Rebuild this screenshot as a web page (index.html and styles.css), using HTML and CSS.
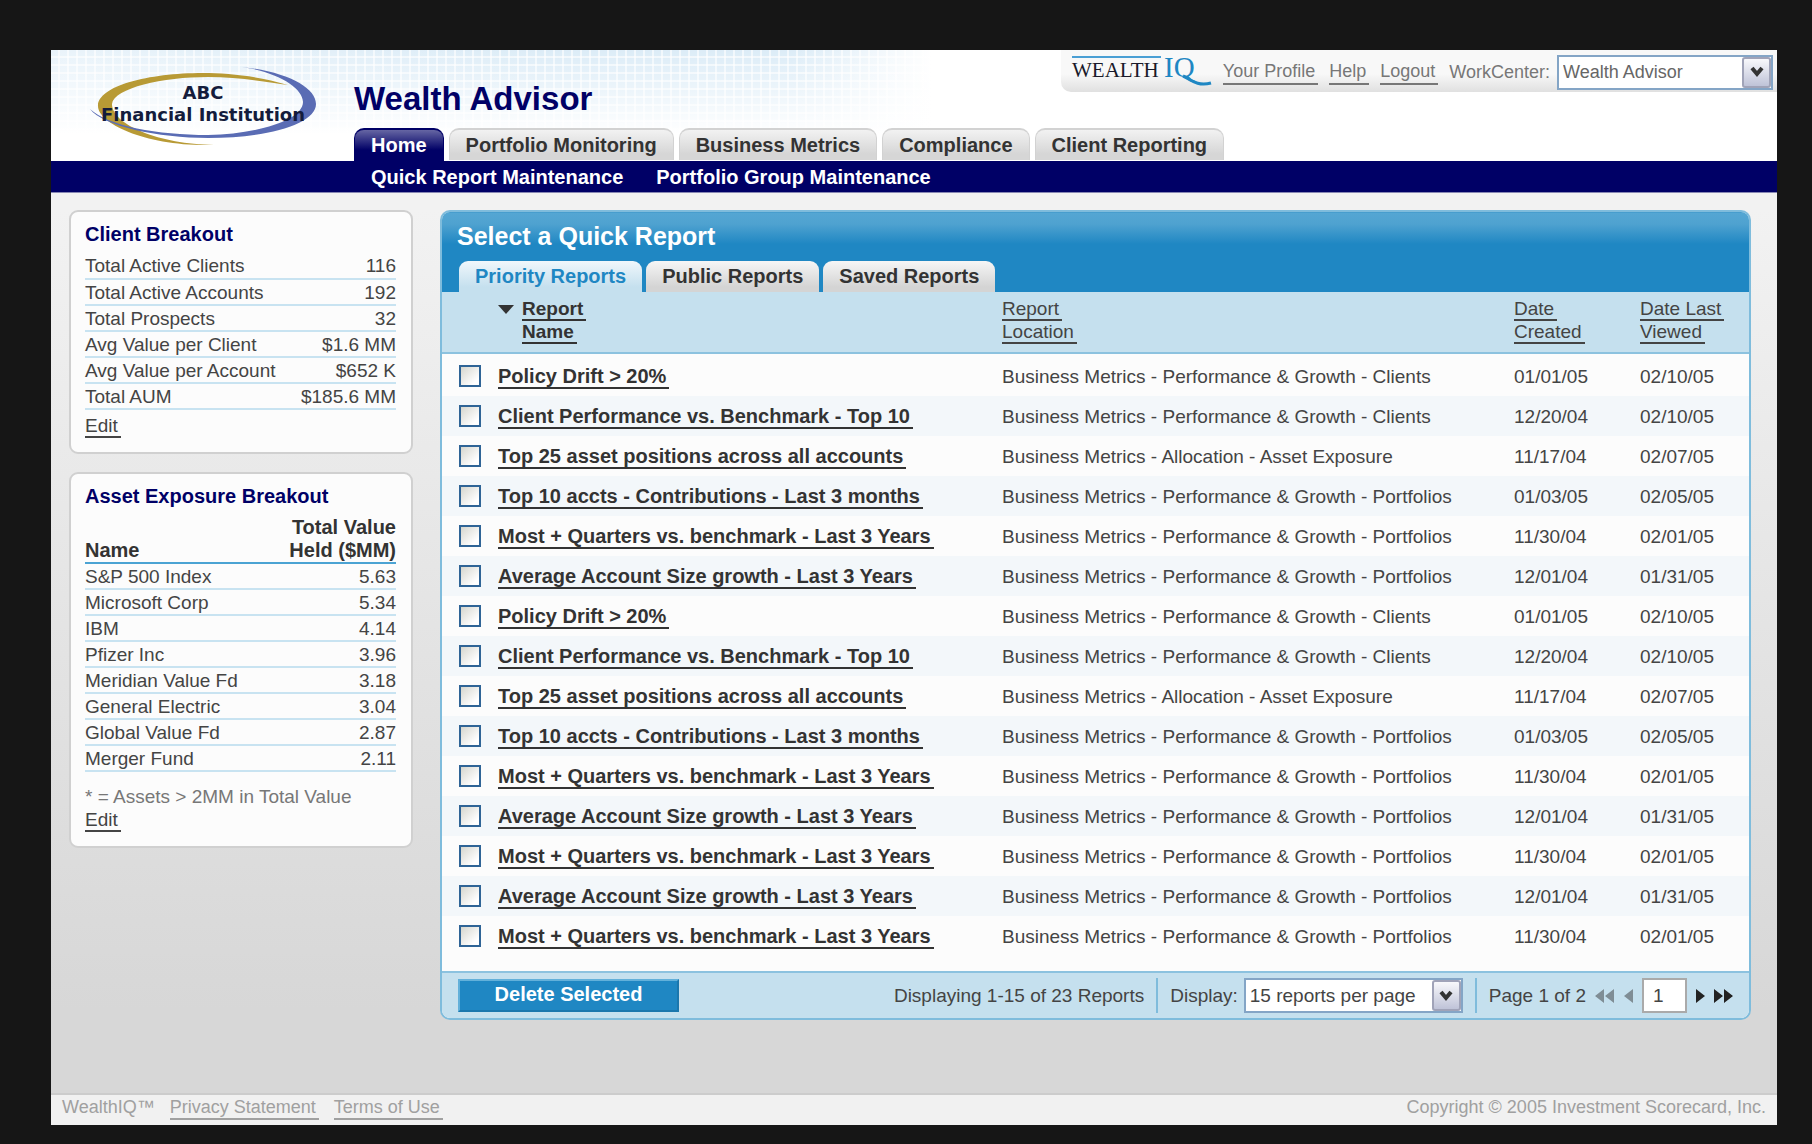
FILE: index.html
```html
<!DOCTYPE html>
<html lang="en">
<head>
  <meta charset="UTF-8">
  <meta name="viewport" content="width=device-width, initial-scale=1.0">
  <title>Wealth Advisor</title>
  <link rel="stylesheet" href="styles.css">
</head>
<body>
  <div class="page">
    <header class="header">
      <a class="logo" href="#">
        <svg width="232" height="84" viewBox="0 0 232 84" role="img" aria-label="ABC Financial Institution">
          <path fill="#b89a35" d="M200 21C170 12 140 9 115 9C60 9 10 22 10 42C10 60 60 83 126 81C72 80 24 61 24 40C26 24 75 13 120 13C150 13 180 18 200 21Z"/>
          <path fill="#5a6cb4" d="M154 3C200 8 228 24 228 40C228 60 180 74 120 74C70 74 15 62 2 45C20 62 70 71 120 71C170 70 215 56 215 38C215 24 190 8 154 3Z"/>
          <text class="logo-text" x="115" y="35">ABC</text>
          <text class="logo-text" x="115" y="57">Financial Institution</text>
        </svg>
      </a>
      <div class="header-main">
        <div class="header-top">
          <h1>Wealth Advisor</h1>
          <div class="utility">
            <svg class="iq" width="140" height="34" viewBox="0 0 140 34" role="img" aria-label="WealthIQ">
              <rect x="0" y="1" width="89" height="2" fill="#4a9fd4"/>
              <text class="iq-dark" x="0" y="22">WEALTH</text>
              <text class="iq-blue" x="92" y="22">IQ</text>
              <path d="M111 21C118 24 125 32 139 28" fill="none" stroke="#1f87c3" stroke-width="3"/>
            </svg>
            <a class="link" href="#">Your Profile</a>
            <a class="link" href="#">Help</a>
            <a class="link" href="#">Logout</a>
            <label for="workcenter">WorkCenter:</label>
            <span class="select select-wide">
              <select id="workcenter"><option>Wealth Advisor</option></select>
              <span class="select-btn"><svg width="14" height="12" viewBox="0 0 14 12"><path d="M2 2L7 8L12 2" fill="none" stroke="#333" stroke-width="4"/></svg></span>
            </span>
          </div>
        </div>
        <nav class="tabs">
          <a class="active" href="#">Home</a>
          <a href="#">Portfolio Monitoring</a>
          <a href="#">Business Metrics</a>
          <a href="#">Compliance</a>
          <a href="#">Client Reporting</a>
        </nav>
      </div>
    </header>
    <nav class="subnav">
      <a href="#">Quick Report Maintenance</a>
      <a href="#">Portfolio Group Maintenance</a>
    </nav>

    <main class="content">
      <aside class="sidebar">
        <section class="card">
          <h2>Client Breakout</h2>
          <table class="stats">
            <tr><td>Total Active Clients</td><td>116</td></tr>
            <tr><td>Total Active Accounts</td><td>192</td></tr>
            <tr><td>Total Prospects</td><td>32</td></tr>
            <tr><td>Avg Value per Client</td><td>$1.6 MM</td></tr>
            <tr><td>Avg Value per Account</td><td>$652 K</td></tr>
            <tr><td>Total AUM</td><td>$185.6 MM</td></tr>
          </table>
          <p class="edit"><a class="link" href="#">Edit</a></p>
        </section>

        <section class="card">
          <h2>Asset Exposure Breakout</h2>
          <table class="stats">
            <thead>
              <tr><th>Name</th><th>Total Value<br>Held ($MM)</th></tr>
            </thead>
            <tbody>
              <tr><td>S&amp;P 500 Index</td><td>5.63</td></tr>
              <tr><td>Microsoft Corp</td><td>5.34</td></tr>
              <tr><td>IBM</td><td>4.14</td></tr>
              <tr><td>Pfizer Inc</td><td>3.96</td></tr>
              <tr><td>Meridian Value Fd</td><td>3.18</td></tr>
              <tr><td>General Electric</td><td>3.04</td></tr>
              <tr><td>Global Value Fd</td><td>2.87</td></tr>
              <tr><td>Merger Fund</td><td>2.11</td></tr>
            </tbody>
          </table>
          <p class="note">* = Assets &gt; 2MM in Total Value</p>
          <p><a class="link" href="#">Edit</a></p>
        </section>
      </aside>

      <section class="panel">
        <div class="panel-head">
          <h2>Select a Quick Report</h2>
          <nav class="panel-tabs">
            <a class="active" href="#">Priority Reports</a>
            <a href="#">Public Reports</a>
            <a href="#">Saved Reports</a>
          </nav>
        </div>

        <table class="reports">
          <colgroup>
            <col class="col-check"><col class="col-name"><col><col class="col-created"><col class="col-viewed">
          </colgroup>
          <thead>
            <tr>
              <td></td>
              <th class="sorted">
                <div class="sort">
                  <svg width="16" height="9" viewBox="0 0 16 9"><path d="M0 0H16L8 9Z" fill="#333"/></svg>
                  <span><a class="link" href="#">Report<br>Name</a></span>
                </div>
              </th>
              <th><a class="link" href="#">Report<br>Location</a></th>
              <th><a class="link" href="#">Date<br>Created</a></th>
              <th><a class="link" href="#">Date Last<br>Viewed</a></th>
            </tr>
          </thead>
          <tbody>
            <tr><td><input type="checkbox" aria-label="Policy Drift"></td><td><a class="link" href="#">Policy Drift &gt; 20%</a></td><td>Business Metrics - Performance &amp; Growth - Clients</td><td>01/01/05</td><td>02/10/05</td></tr>
            <tr><td><input type="checkbox" aria-label="Client Performance"></td><td><a class="link" href="#">Client Performance vs. Benchmark - Top 10</a></td><td>Business Metrics - Performance &amp; Growth - Clients</td><td>12/20/04</td><td>02/10/05</td></tr>
            <tr><td><input type="checkbox" aria-label="Top 25 asset positions"></td><td><a class="link" href="#">Top 25 asset positions across all accounts</a></td><td>Business Metrics - Allocation - Asset Exposure</td><td>11/17/04</td><td>02/07/05</td></tr>
            <tr><td><input type="checkbox" aria-label="Top 10 accounts"></td><td><a class="link" href="#">Top 10 accts - Contributions - Last 3 months</a></td><td>Business Metrics - Performance &amp; Growth - Portfolios</td><td>01/03/05</td><td>02/05/05</td></tr>
            <tr><td><input type="checkbox" aria-label="Most + Quarters"></td><td><a class="link" href="#">Most + Quarters vs. benchmark - Last 3 Years</a></td><td>Business Metrics - Performance &amp; Growth - Portfolios</td><td>11/30/04</td><td>02/01/05</td></tr>
            <tr><td><input type="checkbox" aria-label="Average Account Size"></td><td><a class="link" href="#">Average Account Size growth - Last 3 Years</a></td><td>Business Metrics - Performance &amp; Growth - Portfolios</td><td>12/01/04</td><td>01/31/05</td></tr>
            <tr><td><input type="checkbox" aria-label="Policy Drift"></td><td><a class="link" href="#">Policy Drift &gt; 20%</a></td><td>Business Metrics - Performance &amp; Growth - Clients</td><td>01/01/05</td><td>02/10/05</td></tr>
            <tr><td><input type="checkbox" aria-label="Client Performance"></td><td><a class="link" href="#">Client Performance vs. Benchmark - Top 10</a></td><td>Business Metrics - Performance &amp; Growth - Clients</td><td>12/20/04</td><td>02/10/05</td></tr>
            <tr><td><input type="checkbox" aria-label="Top 25 asset positions"></td><td><a class="link" href="#">Top 25 asset positions across all accounts</a></td><td>Business Metrics - Allocation - Asset Exposure</td><td>11/17/04</td><td>02/07/05</td></tr>
            <tr><td><input type="checkbox" aria-label="Top 10 accounts"></td><td><a class="link" href="#">Top 10 accts - Contributions - Last 3 months</a></td><td>Business Metrics - Performance &amp; Growth - Portfolios</td><td>01/03/05</td><td>02/05/05</td></tr>
            <tr><td><input type="checkbox" aria-label="Most + Quarters"></td><td><a class="link" href="#">Most + Quarters vs. benchmark - Last 3 Years</a></td><td>Business Metrics - Performance &amp; Growth - Portfolios</td><td>11/30/04</td><td>02/01/05</td></tr>
            <tr><td><input type="checkbox" aria-label="Average Account Size"></td><td><a class="link" href="#">Average Account Size growth - Last 3 Years</a></td><td>Business Metrics - Performance &amp; Growth - Portfolios</td><td>12/01/04</td><td>01/31/05</td></tr>
            <tr><td><input type="checkbox" aria-label="Most + Quarters"></td><td><a class="link" href="#">Most + Quarters vs. benchmark - Last 3 Years</a></td><td>Business Metrics - Performance &amp; Growth - Portfolios</td><td>11/30/04</td><td>02/01/05</td></tr>
            <tr><td><input type="checkbox" aria-label="Average Account Size"></td><td><a class="link" href="#">Average Account Size growth - Last 3 Years</a></td><td>Business Metrics - Performance &amp; Growth - Portfolios</td><td>12/01/04</td><td>01/31/05</td></tr>
            <tr><td><input type="checkbox" aria-label="Most + Quarters"></td><td><a class="link" href="#">Most + Quarters vs. benchmark - Last 3 Years</a></td><td>Business Metrics - Performance &amp; Growth - Portfolios</td><td>11/30/04</td><td>02/01/05</td></tr>
          </tbody>
        </table>

        <div class="panel-foot">
          <button class="delete" type="button">Delete Selected</button>
          <span class="count">Displaying 1-15 of 23 Reports</span>
          <span class="divided">
            <label for="per-page">Display:</label>
            <span class="select">
              <select id="per-page"><option>15 reports per page</option></select>
              <span class="select-btn"><svg width="14" height="12" viewBox="0 0 14 12"><path d="M2 2L7 8L12 2" fill="none" stroke="#333" stroke-width="4"/></svg></span>
            </span>
          </span>
          <span class="divided pager">
            <label for="page-no">Page 1 of 2</label>
            <button type="button" aria-label="First page"><svg width="20" height="14" viewBox="0 0 20 14"><path d="M9 0V14L0 7ZM19 0V14L10 7Z" fill="#7f8d95"/></svg></button>
            <button type="button" aria-label="Previous page"><svg width="9" height="14" viewBox="0 0 9 14"><path d="M9 0V14L0 7Z" fill="#7f8d95"/></svg></button>
            <input id="page-no" type="text" value="1">
            <button type="button" aria-label="Next page"><svg width="9" height="14" viewBox="0 0 9 14"><path d="M0 0L9 7L0 14Z" fill="#222"/></svg></button>
            <button type="button" aria-label="Last page"><svg width="20" height="14" viewBox="0 0 20 14"><path d="M0 0L9 7L0 14ZM10 0L19 7L10 14Z" fill="#222"/></svg></button>
          </span>
        </div>
      </section>
    </main>

    <footer class="footer">
      <span>WealthIQ™</span>
      <a class="link" href="#">Privacy Statement</a>
      <a class="link" href="#">Terms of Use</a>
      <span class="copyright">Copyright © 2005 Investment Scorecard, Inc.</span>
    </footer>
  </div>
</body>
</html>
```

FILE: styles.css
```css
* {
  box-sizing: border-box;
}

body {
  margin: 0;
  padding: 50px 35px 19px 51px;
  background: #161616;
  color: #444;
  font-family: "Liberation Sans", Arial, sans-serif;
  font-size: 19px;
  line-height: 23px;
}

h1, h2, p {
  margin: 0;
}

a {
  color: inherit;
  text-decoration: none;
}

.link {
  border-bottom: 2px solid currentColor;
  padding-right: 3px;
  -webkit-box-decoration-break: clone;
  box-decoration-break: clone;
}

.page {
  background: linear-gradient(#f2f2f2 160px, #d7d7d7 960px);
}

/* header */
.header {
  display: flex;
  align-items: flex-start;
  background:
    repeating-linear-gradient(90deg, transparent 0 7px, rgba(255, 255, 255, 0.6) 7px 9px),
    repeating-linear-gradient(transparent 0 6px, rgba(255, 255, 255, 0.6) 6px 8px),
    linear-gradient(transparent, #fff 84px),
    linear-gradient(90deg, rgba(255, 255, 255, 0.4), transparent 500px, transparent 740px, #fff 880px),
    #dcecf7;
}

.logo {
  flex: none;
  width: 303px;
  padding: 14px 0 0 37px;
}

.logo svg, .iq {
  display: block;
  overflow: visible;
}

.logo-text {
  font-family: "DejaVu Sans", Verdana, sans-serif;
  font-size: 18px;
  font-weight: bold;
  text-anchor: middle;
  fill: #141c3c;
}

.header-main {
  flex: 1;
}

.header-top {
  display: flex;
  justify-content: space-between;
  align-items: flex-start;
}

h1 {
  padding: 30px 0 10px;
  color: #000066;
  font-size: 33px;
  line-height: 38px;
}

.tabs {
  display: flex;
  gap: 5px;
  height: 33px;
}

.tabs a {
  height: 32px;
  padding: 0 16px;
  border: 2px solid #d2d2d2;
  border-width: 2px 1px 0;
  border-radius: 10px 10px 0 0;
  background: linear-gradient(#f2f2f2, #d6d6d6 24px);
  color: #333;
  font-size: 20px;
  font-weight: bold;
  line-height: 30px;
  white-space: nowrap;
}

.tabs a.active {
  height: 33px;
  border-color: #000066;
  background: linear-gradient(#6666a3, #000066 20px);
  color: #fff;
}

.utility {
  display: flex;
  align-items: center;
  gap: 11px;
  height: 42px;
  padding: 2px 4px 0 11px;
  border-bottom-left-radius: 10px;
  background: linear-gradient(#f8f8f8 24px, #e0e0e0);
  color: #777;
  font-size: 18px;
  white-space: nowrap;
}

.utility label {
  margin-right: -4px;
}

.iq-dark, .iq-blue {
  font-family: "Liberation Serif", serif;
}

.iq-dark {
  font-size: 21px;
  fill: #1a1a2a;
}

.iq-blue {
  font-size: 29px;
  fill: #1f87c3;
}

.subnav {
  display: flex;
  gap: 33px;
  height: 32px;
  padding-left: 320px;
  background: #000066;
  border-bottom: 1px solid #8888b4;
  color: #fff;
  font-size: 20px;
  font-weight: bold;
  line-height: 32px;
}

/* drop-downs */
.select {
  position: relative;
  display: inline-block;
  width: 219px;
}

.select-wide {
  width: 216px;
}

.select select {
  display: block;
  width: 100%;
  height: 35px;
  padding: 0 4px;
  border: 2px solid #84a5c6;
  background: #fff;
  color: #444;
  font-family: inherit;
  font-size: inherit;
  appearance: none;
}

.select-wide select {
  color: #666;
}

.select-btn {
  position: absolute;
  top: 2px;
  right: 2px;
  bottom: 2px;
  display: flex;
  align-items: center;
  justify-content: center;
  width: 29px;
  border: 2px solid #a0a3b8;
  border-radius: 3px;
  background: linear-gradient(#f8f8fb, #bfc3d8);
  pointer-events: none;
}

/* content */
.content {
  display: flex;
  align-items: flex-start;
  gap: 27px;
  padding: 17px 26px 73px 18px;
}

.sidebar {
  width: 344px;
  flex-shrink: 0;
}

.card {
  margin-bottom: 18px;
  padding: 10px 15px 15px 14px;
  border: 2px solid #d0d0d0;
  border-radius: 9px;
  background: #fcfcfc;
}

.card h2 {
  margin-bottom: 7px;
  color: #000066;
  font-size: 20px;
  line-height: 24px;
}

.stats {
  width: 100%;
  border-collapse: collapse;
}

.stats td, .stats th {
  padding: 0;
  text-align: left;
}

.stats td {
  height: 26px;
  border-bottom: 2px solid #c8e3f1;
}

.stats th {
  padding-top: 1px;
  border-bottom: 2px solid #4ba3d3;
  color: #333;
  font-size: 20px;
  vertical-align: bottom;
}

.stats td:last-child, .stats th:last-child {
  text-align: right;
}

.edit {
  margin-top: 4px;
}

.note {
  margin-top: 13px;
  color: #777;
}

.panel {
  flex: 1;
  border: 2px solid #7fbcdc;
  border-radius: 10px;
  background: #fcfcfc;
  overflow: hidden;
}

.panel-head {
  padding: 12px 17px 0;
  margin: -2px -2px 0;
  background: linear-gradient(#3a94c8 2px, #54a6d3 3px, #4fa2d0 14px, #1f87c3 34px);
}

.panel-head h2 {
  margin-bottom: 11px;
  color: #fff;
  font-size: 25px;
  line-height: 28px;
}

.panel-tabs {
  display: flex;
  gap: 4px;
  padding-left: 2px;
}

.panel-tabs a {
  height: 31px;
  padding: 0 16px;
  border-radius: 9px 9px 0 0;
  background: linear-gradient(#f6f6f6, #d4d4d4 26px);
  color: #333;
  font-size: 20px;
  font-weight: bold;
  line-height: 30px;
}

.panel-tabs a.active {
  background: linear-gradient(#f0f7fb, #c5e0ee 26px);
  color: #1f87c3;
}

.reports {
  width: 100%;
  border-collapse: collapse;
  table-layout: fixed;
}

.col-check {
  width: 56px;
}

.col-name {
  width: 504px;
}

.col-created {
  width: 126px;
}

.col-viewed {
  width: 109px;
}

.reports td, .reports th {
  padding: 0;
  text-align: left;
  font-weight: normal;
  white-space: nowrap;
}

.reports thead {
  background: #c5e0ee;
  border-bottom: 2px solid #8cc2df;
}

.reports thead th {
  height: 60px;
  padding: 5px 0 9px;
}

.reports th.sorted {
  font-weight: bold;
  color: #333;
}

.sort {
  display: flex;
  gap: 8px;
}

.sort svg {
  margin-top: 8px;
}

/* spacer above the first report */
.reports tbody::before {
  content: "";
  display: block;
  height: 2px;
}

.reports tbody td {
  height: 40px;
}

.reports tbody tr:nth-child(even) {
  background: #f3f7fa;
}

.reports tbody td:nth-child(2) {
  color: #333;
  font-size: 20px;
  font-weight: bold;
}

.reports input {
  display: block;
  width: 22px;
  height: 22px;
  margin: 0 0 0 17px;
  border: 2px solid #2f6496;
  background: linear-gradient(135deg, #d6d6ce, #fff 80%);
  appearance: none;
}

.panel-foot {
  display: flex;
  align-items: center;
  height: 47px;
  margin-top: 15px;
  padding: 0 15px 0 16px;
  border-top: 2px solid #8cc2df;
  background: #c5e0ee;
  white-space: nowrap;
}

.delete {
  width: 221px;
  height: 33px;
  padding: 0 0 3px;
  border: 2px solid #1b77ad;
  border-top-color: #62b0da;
  border-left-color: #62b0da;
  background: #1f87c3;
  color: #fff;
  font-family: inherit;
  font-size: 20px;
  font-weight: bold;
}

.count {
  margin-left: auto;
}

.divided {
  display: flex;
  align-items: center;
  gap: 6px;
  height: 35px;
  margin-left: 12px;
  padding-left: 12px;
  border-left: 2px solid #7fbcdc;
}

.pager {
  gap: 9px;
}

.pager button {
  display: flex;
  padding: 0;
  border: 0;
  background: none;
}

.pager input {
  width: 45px;
  height: 35px;
  padding: 0 9px;
  border: 2px solid #aaa;
  background: #fff;
  color: #444;
  font-family: inherit;
  font-size: 19px;
}

.footer {
  display: flex;
  gap: 15px;
  height: 32px;
  padding: 1px 11px 0;
  border-top: 2px solid #ccc;
  background: #f1f1f1;
  color: #a0a0a0;
  font-size: 18px;
}

.footer .link {
  height: 24px;
}

.copyright {
  margin-left: auto;
}
```
